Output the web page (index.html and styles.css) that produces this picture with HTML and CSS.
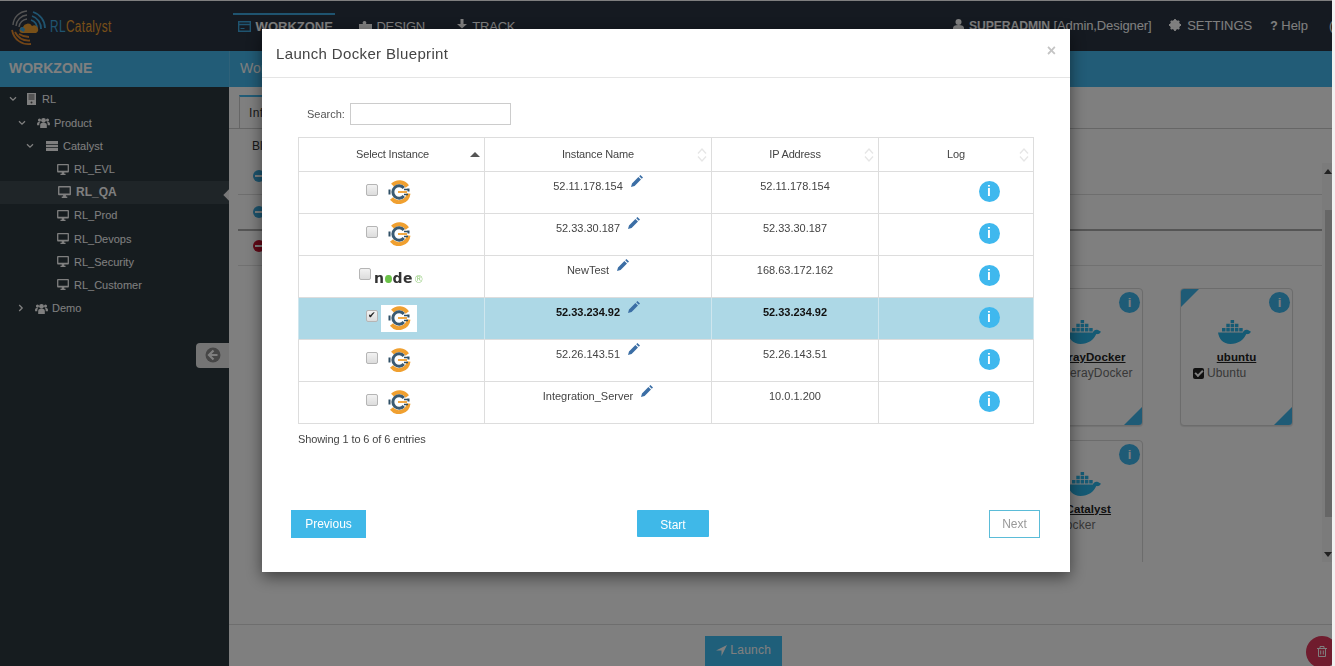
FILE: index.html

```html
<!DOCTYPE html>
<html lang="en">
<head>
  <meta charset="UTF-8">
  <meta name="viewport" content="width=device-width, initial-scale=1.0"/>
  <title>RLCatalyst - Launch Docker Blueprint</title>
  <link rel="stylesheet" href="styles.css">
</head>
<body>
  <svg class="defs" width="0" height="0">
    <symbol id="i-chef" viewBox="0 0 24 24">
      <path d="M5.500 5.200A9.600 9.600 0 0 1 20.300 6.500M21.500 13.500A9.600 9.600 0 0 1 4.500 18.500" fill="none" stroke="#f0a030" stroke-width="4"/>
      <path d="M2.500 9.500v5M21.500 8.500v3" stroke="#2f4f66" stroke-width="2"/>
      <path d="M16.800 8A6.200 6.200 0 1 0 16.800 16" fill="none" stroke="#3a5a72" stroke-width="3"/>
      <path d="M11 12H20" stroke="#f0a030" stroke-width="1.800"/>
      <path d="M17 9.500h4M17 14.500h4" stroke="#2f4f66" stroke-width="1.500"/>
    </symbol>
    <symbol id="i-pencil" viewBox="0 0 12 12">
      <path d="M0 12l1-3.600 6.400-6.400 2.600 2.600L3.600 11zM8.200 1.200L9.400 0 12 2.600l-1.200 1.200z" fill="#3b6ea5"/>
    </symbol>
    <symbol id="i-docker" viewBox="0 0 35 24">
      <path d="M1 12.500h25c.6-2.600 3-3.200 5-2.400l3 1.600c-1 2-3 2.600-4.800 2.400C27 20 21 24 13.500 24 6 24 2 19 1 12.500z" fill="#2ab4e8"/>
      <path d="M5 8h3.500v3.500H5zM9.300 8h3.500v3.500H9.300zM13.600 8h3.500v3.500h-3.500zM17.900 8h3.500v3.500h-3.500zM22.200 8h3.500v3.500h-3.500zM9.300 3.700h3.500v3.500H9.300zM13.600 3.700h3.500v3.500h-3.500zM17.900 3.700h3.500v3.500h-3.500zM13.600 0h3.500v3h-3.500z" fill="#2ab4e8"/>
    </symbol>
    <symbol id="i-desktop" viewBox="0 0 14 13">
      <path d="M1 0h12a1 1 0 0 1 1 1v8a1 1 0 0 1-1 1H8.500v1.500H10V13H4v-1.500h1.500V10H1a1 1 0 0 1-1-1V1a1 1 0 0 1 1-1zm.5 1.500v6.500h11V1.500z" fill="#fff"/>
    </symbol>
    <symbol id="i-users" viewBox="0 0 14 12">
      <circle cx="7" cy="3.600" r="2.600" fill="#fff"/>
      <circle cx="2.600" cy="3.400" r="1.700" fill="#fff"/>
      <circle cx="11.400" cy="3.400" r="1.700" fill="#fff"/>
      <path d="M3.400 12V8.600C3.400 7 5 6.400 7 6.400s3.600.6 3.600 2.200V12zM0 9V7c0-1 1-1.600 2.600-1.600l.6.2C2.600 6.400 2.400 7.400 2.400 9zM14 9V7c0-1-1-1.600-2.600-1.600l-.6.2c.6.8.8 1.800.8 3.400z" fill="#fff"/>
    </symbol>
    <symbol id="i-down" viewBox="0 0 8 6">
      <path d="M1 1.200l3 3 3-3" fill="none" stroke="#fff" stroke-width="1.300"/>
    </symbol>
    <symbol id="i-right" viewBox="0 0 6 8">
      <path d="M1.200 1l3 3-3 3" fill="none" stroke="#fff" stroke-width="1.300"/>
    </symbol>
    <symbol id="i-sort" viewBox="0 0 10 14">
      <path d="M1 5.500L5 1l4 4.500M1 8.500L5 13l4-4.500" fill="none" stroke="#e6e6e6" stroke-width="1.300"/>
    </symbol>
  </svg>

  <div class="app">
    <header class="topbar">
      <div class="brand">
        <svg class="brand-mark" width="38" height="38" viewBox="0 0 38 38" fill="none">
          <path d="M4 17A15 15 0 0 1 18 3M7 18A12 12 0 0 1 18 7M10 19A9 9 0 0 1 18 11" stroke="#a8a8a8" stroke-width="1.400"/>
          <path d="M24 4A17 17 0 0 1 36 20M23 8A13 13 0 0 1 32 21M22 12A9 9 0 0 1 28 21" stroke="#3fa9e0" stroke-width="1.800"/>
          <path d="M3 22C5 32 13 37 22 36M6 24C9 30 14 33 21 32.500M10 26C13 28 16 29 20 29" stroke="#e58a2e" stroke-width="1.800"/>
          <path d="M13 25a3 3 0 0 1 1-6 5 5 0 0 1 9-1 4 4 0 0 1 4 7z" fill="#f0a030"/>
          <path d="M11 22a2.500 2.500 0 0 1 3-3l2 2-1 3z" fill="#3fa9e0"/>
        </svg>
        <span class="brand-name"><span class="brand-rl">RL</span><span class="brand-cat">Catalyst</span></span>
      </div>

      <nav class="nav">
        <a class="nav-item active">
          <svg width="13" height="11" viewBox="0 0 13 11" fill="none"><path d="M.7.7h11.600v9.600H.7zM.7 3.500h11.600" stroke="#3fa9e0" stroke-width="1.400"/><path d="M2.500 7.500h4" stroke="#3fa9e0"/></svg>
          WORKZONE
        </a>
        <a class="nav-item">
          <svg width="13" height="12" viewBox="0 0 13 12" fill="#fff"><path d="M0 4h4C3 2.500 4 1 5.500 1S8 2.500 7 4h6v8H0z"/></svg>
          DESIGN
        </a>
        <a class="nav-item track">
          <svg width="12" height="13" viewBox="0 0 12 13" fill="#fff"><path d="M4.500 0h3v5H11L6 9.500 1 5h3.500zM0 10h12v3H0z"/></svg>
          TRACK
        </a>
      </nav>

      <div class="user-links">
        <span class="user-link who">
          <svg width="11" height="12" viewBox="0 0 11 12" fill="#fff"><circle cx="5.500" cy="3" r="3"/><path d="M0 12V9c0-2 2-3 5.500-3S11 7 11 9v3z"/></svg>
          <span><b>SUPERADMIN</b> [Admin,Designer]</span>
        </span>
        <span class="user-link settings">
          <svg width="12" height="12" viewBox="0 0 12 12"><circle cx="6" cy="6" r="3.800" fill="none" stroke="#fff" stroke-width="2.600"/><path d="M6 0v12M0 6h12M1.800 1.800l8.400 8.400M10.200 1.800l-8.400 8.400" stroke="#fff" stroke-width="1.800"/></svg>
          SETTINGS
        </span>
        <span class="user-link"><b>?</b> Help</span>
        <span class="user-link cut">(</span>
      </div>
    </header>

    <div class="content">
      <aside class="sidebar">
        <div class="side-title">WORKZONE</div>
        <ul class="tree">
          <li class="node lvl-0">
            <svg class="chev" width="8" height="6"><use href="#i-down"/></svg>
            <svg class="ico" width="9" height="12" viewBox="0 0 9 12"><path d="M0 0h9v12H0z" fill="#fff"/><path d="M1.500 2h6M1.500 4h6M1.500 6h6" stroke="#555"/><circle cx="4.500" cy="9.500" r="1" fill="#555"/></svg>
            RL
          </li>
          <li class="node lvl-1">
            <svg class="chev" width="8" height="6"><use href="#i-down"/></svg>
            <svg class="ico" width="13" height="11"><use href="#i-users"/></svg>
            Product
          </li>
          <li class="node lvl-2">
            <svg class="chev" width="8" height="6"><use href="#i-down"/></svg>
            <svg class="ico" width="12" height="10" viewBox="0 0 12 10" fill="#fff"><path d="M0 0h12v3H0zM0 3.800h12v2.400H0zM0 7h12v3H0z"/></svg>
            Catalyst
          </li>
          <li class="node leaf"><svg class="ico" width="12" height="11"><use href="#i-desktop"/></svg>RL_EVL</li>
          <li class="node leaf active"><svg class="ico" width="13" height="12"><use href="#i-desktop"/></svg>RL_QA</li>
          <li class="node leaf"><svg class="ico" width="12" height="11"><use href="#i-desktop"/></svg>RL_Prod</li>
          <li class="node leaf"><svg class="ico" width="12" height="11"><use href="#i-desktop"/></svg>RL_Devops</li>
          <li class="node leaf"><svg class="ico" width="12" height="11"><use href="#i-desktop"/></svg>RL_Security</li>
          <li class="node leaf"><svg class="ico" width="12" height="11"><use href="#i-desktop"/></svg>RL_Customer</li>
          <li class="node lvl-1">
            <svg class="chev" width="6" height="8"><use href="#i-right"/></svg>
            <svg class="ico" width="13" height="11"><use href="#i-users"/></svg>
            Demo
          </li>
        </ul>
        <button class="collapse-btn" type="button">
          <svg width="16" height="16" viewBox="0 0 16 16"><circle cx="8" cy="8" r="7.500" fill="#8c8c8c"/><path d="M8.500 3.500L4 8l4.500 4.500M4.500 8H12.500" fill="none" stroke="#fff" stroke-width="2.200"/></svg>
        </button>
      </aside>

      <main class="main">
        <div class="crumb">Workzone</div>
        <div class="tabs"><div class="tab">Info</div></div>
        <div class="tab-note">Blueprints</div>

        <div class="bp-scroll">
          <div class="bp-list">
            <div class="bp-row"><span class="dot blue"></span></div>
            <div class="bp-row thick"><span class="dot blue"></span></div>
            <div class="bp-row red-row"><span class="dot red"></span></div>

            <div class="cards">
              <div class="bp-card">
                <span class="card-info">i</span>
                <svg class="whale" width="35" height="24"><use href="#i-docker"/></svg>
                <div class="card-title">LiferayDocker</div>
                <div class="card-os"><span class="os-check"></span>LiferayDocker</div>
                <span class="corner-br"></span>
              </div>
              <div class="bp-card">
                <span class="corner-tl"></span>
                <span class="card-info">i</span>
                <svg class="whale" width="35" height="24"><use href="#i-docker"/></svg>
                <div class="card-title">ubuntu</div>
                <div class="card-os"><span class="os-check"></span>Ubuntu</div>
                <span class="corner-br"></span>
              </div>
              <div class="bp-card">
                <span class="card-info">i</span>
                <svg class="whale" width="35" height="24"><use href="#i-docker"/></svg>
                <div class="card-title long">RLCatalyst</div>
                <div class="card-os"><span class="os-check"></span>Docker</div>
              </div>
            </div>
          </div>
          <div class="scrollbar">
            <span class="arrow-up"></span>
            <span class="thumb"></span>
            <span class="arrow-down"></span>
          </div>
        </div>

        <div class="launch-bar">
          <button class="launch-btn" type="button">
            <svg width="11" height="11" viewBox="0 0 11 11" fill="#fff"><path d="M11 0L0 5.500h5.500V11z"/></svg>
            Launch
          </button>
        </div>
        <span class="trash">
          <svg width="10" height="11" viewBox="0 0 10 11" fill="none" stroke="#fff"><path d="M0 2.500h10M3 2.500V.5h4v2M1.500 2.500v8h7v-8M3.700 4.500v4M6.300 4.500v4"/></svg>
        </span>
      </main>
    </div>
  </div>

  <div class="backdrop"></div>

  <div class="modal">
    <div class="modal-head">
      <h4>Launch Docker Blueprint</h4>
      <span class="close">&times;</span>
    </div>

    <div class="modal-body">
      <label class="search">Search:<input type="text"></label>

      <table class="grid">
        <thead>
          <tr>
            <th class="c1">Select Instance<span class="sort-on"></span></th>
            <th class="c2">Instance Name<svg class="sort" width="10" height="14"><use href="#i-sort"/></svg></th>
            <th class="c3">IP Address<svg class="sort" width="10" height="14"><use href="#i-sort"/></svg></th>
            <th class="c4">Log<svg class="sort" width="10" height="14"><use href="#i-sort"/></svg></th>
          </tr>
        </thead>
        <tbody>
          <tr>
            <td><div class="pick"><input type="checkbox"><span class="os-logo"><svg width="24" height="24"><use href="#i-chef"/></svg></span></div></td>
            <td>52.11.178.154<svg class="pencil" width="12" height="12"><use href="#i-pencil"/></svg></td>
            <td>52.11.178.154</td>
            <td><span class="info">i</span></td>
          </tr>
          <tr>
            <td><div class="pick"><input type="checkbox"><span class="os-logo"><svg width="24" height="24"><use href="#i-chef"/></svg></span></div></td>
            <td>52.33.30.187<svg class="pencil" width="12" height="12"><use href="#i-pencil"/></svg></td>
            <td>52.33.30.187</td>
            <td><span class="info">i</span></td>
          </tr>
          <tr>
            <td><div class="pick node-pick"><input type="checkbox"><span class="node-logo">n<i></i>de<em>&reg;</em></span></div></td>
            <td>NewTest<svg class="pencil" width="12" height="12"><use href="#i-pencil"/></svg></td>
            <td>168.63.172.162</td>
            <td><span class="info">i</span></td>
          </tr>
          <tr class="selected">
            <td><div class="pick"><input type="checkbox" checked><span class="os-logo"><svg width="24" height="24"><use href="#i-chef"/></svg></span></div></td>
            <td>52.33.234.92<svg class="pencil" width="12" height="12"><use href="#i-pencil"/></svg></td>
            <td>52.33.234.92</td>
            <td><span class="info">i</span></td>
          </tr>
          <tr>
            <td><div class="pick"><input type="checkbox"><span class="os-logo"><svg width="24" height="24"><use href="#i-chef"/></svg></span></div></td>
            <td>52.26.143.51<svg class="pencil" width="12" height="12"><use href="#i-pencil"/></svg></td>
            <td>52.26.143.51</td>
            <td><span class="info">i</span></td>
          </tr>
          <tr>
            <td><div class="pick"><input type="checkbox"><span class="os-logo"><svg width="24" height="24"><use href="#i-chef"/></svg></span></div></td>
            <td>Integration_Server<svg class="pencil" width="12" height="12"><use href="#i-pencil"/></svg></td>
            <td>10.0.1.200</td>
            <td><span class="info">i</span></td>
          </tr>
        </tbody>
      </table>

      <div class="entries">Showing 1 to 6 of 6 entries</div>
    </div>

    <div class="modal-foot">
      <button class="btn" type="button">Previous</button>
      <button class="btn start" type="button">Start</button>
      <button class="btn ghost" type="button">Next</button>
    </div>
  </div>
</body>
</html>
```

FILE: styles.css

```css
* { box-sizing: border-box; }
html, body { height: 100%; }
body { margin: 0; background: #f1f1f1; font-family: "Liberation Sans", Arial, sans-serif; overflow: hidden; }
.defs { position: absolute; }
button { font-family: inherit; }

.app { width: calc(100% - 3px); height: 100vh; display: flex; flex-direction: column; }

/* top bar */
.topbar { height: 51px; flex: none; display: flex; background: #2a3442; border-top: 1px solid #fff; color: #fff; overflow: hidden; }
.brand { width: 233px; flex: none; display: flex; align-items: center; padding: 2px 0 0 9px; }
.brand-mark { flex: none; }
.brand-name { font-size: 16px; margin-left: 3px; display: inline-block; transform: scaleX(.74); transform-origin: left center; letter-spacing: .5px; white-space: nowrap; }
.brand-rl { color: #3fa9e0; }
.brand-cat { color: #f0a030; }

.nav { display: flex; gap: 19px; padding-top: 12px; font-size: 13px; }
.nav-item { height: 22px; padding: 4px 5px 0; border-top: 2px solid transparent; white-space: nowrap; line-height: 16px; letter-spacing: -.2px; }
.nav-item svg { margin-right: 1px; vertical-align: -1px; }
.nav-item.active { border-top-color: #3fa9e0; font-weight: bold; width: 102px; letter-spacing: 0; }
.nav-item.track { margin-left: 2px; }

.user-links { margin-left: auto; display: flex; gap: 20px; padding-top: 17px; font-size: 13px; line-height: 16px; white-space: nowrap; }
.user-link b { font-size: 12.2px; }
.user-link svg { vertical-align: -1px; margin-right: 1px; }
.user-link.who { margin-right: -3px; letter-spacing: -.1px; }
.user-link.settings { margin-right: -2px; }
.user-link.settings svg { margin-right: 3px; }
.user-link.cut { width: 3px; margin-left: 1px; overflow: hidden; }

.content { flex: 1; display: flex; min-height: 0; }

/* left tree */
.sidebar { width: 229px; flex: none; background: #2c383e; position: relative; color: #fff; }
.side-title { height: 36px; background: #44b8ee; padding-left: 9px; font-size: 14px; font-weight: bold; line-height: 34px; color: #fff; }
.tree { list-style: none; margin: 0; padding: .9px 0 0; font-size: 11px; }
.node { height: 23.2px; display: flex; align-items: center; position: relative; }
.chev { flex: none; }
.ico { flex: none; }
.lvl-0 { padding-left: 9px; }
.lvl-0 .ico { margin: 0 6px 0 10px; }
.lvl-1 { padding-left: 18px; }
.lvl-1 .ico { margin: 0 4px 0 11px; }
.lvl-2 { padding-left: 26px; }
.lvl-2 .ico { margin: 0 5px 0 12px; }
.leaf { padding-left: 57px; }
.leaf .ico { margin-right: 5px; }
.node.active { background: #3e4a50; font-size: 12px; font-weight: bold; padding-left: 58px; }
.node.active::after { content: ""; position: absolute; right: -4px; top: 10px; width: 8px; height: 8px; background: #f0f0f0; transform: rotate(45deg); }
.collapse-btn { position: absolute; right: 0; top: 292px; width: 33px; height: 25px; border: 0; padding: 0 0 2px; background: #e9e9e9; border-radius: 4px 0 0 4px; display: flex; align-items: center; justify-content: center; }

/* main area */
.main { flex: 1; min-width: 0; background: #fff; display: flex; flex-direction: column; position: relative; overflow: hidden; font-size: 12px; color: #333; }
.crumb { height: 36px; flex: none; background: #44b8ee; border-left: 1px solid #5cc3f2; padding-left: 10px; font-size: 14px; line-height: 34px; color: #fff; }
.tabs { margin-top: 8px; padding-left: 10px; height: 34px; flex: none; border-bottom: 1px solid #ccc; }
.tab { width: 120px; height: 33px; border-top: 2px solid #44b8ee; border-left: 1px solid #ccc; padding: 9px 0 0 9px; letter-spacing: .4px; }
.tab-note { height: 34px; flex: none; padding: 10px 0 0 23px; }

.bp-scroll { height: 399px; flex: none; display: flex; padding-left: 9px; }
.bp-list { flex: 1; min-width: 0; overflow: hidden; }
.bp-row { height: 32px; padding: 7px 0 0 15px; border-bottom: 1px solid #ddd; }
.bp-row.thick { height: 36px; padding-top: 11px; border-bottom: 2px solid #aaa; }
.bp-row.red-row { height: 35px; padding-top: 9px; border-bottom-color: #e3e3e3; }
.dot { display: block; width: 12px; height: 12px; border-radius: 50%; position: relative; }
.dot::after { content: ""; position: absolute; left: 2px; right: 2px; top: 5px; height: 2px; background: #fff; }
.dot.blue { background: #3aa8dc; }
.dot.red { background: #c4122e; }
.cards { display: grid; grid-template-columns: 113px 113px; gap: 14px 37px; justify-content: end; padding: 22px 29px 0 0; }
.bp-card { height: 138px; position: relative; border: 1px solid #d8d8d8; border-radius: 4px; text-align: center; padding-top: 31px; overflow: hidden; background: #fff; box-shadow: 0 1px 1px rgba(0,0,0,.1); }
.whale { display: block; margin: 0 auto 0; position: relative; left: -2px; }
.card-title { margin-top: 6px; font-size: 11.5px; font-weight: bold; text-decoration: underline; color: #222; letter-spacing: .1px; line-height: 14px; }
.card-title.long { padding-right: 12px; }
.card-os { margin-top: 1px; padding-left: 12px; text-align: left; font-size: 12px; line-height: 16px; color: #707070; white-space: nowrap; letter-spacing: .12px; }
.os-check { display: inline-block; width: 11px; height: 11px; margin-right: 3px; border-radius: 2px; background: #222; vertical-align: -2px; position: relative; }
.os-check::after { content: ""; position: absolute; left: 2px; top: 2px; width: 6px; height: 3px; border-left: 2px solid #fff; border-bottom: 2px solid #fff; transform: rotate(-45deg); }
.card-info { position: absolute; right: 2px; top: 3px; width: 21px; height: 21px; border-radius: 50%; background: #3fb6ec; color: #fff; font-size: 13px; font-weight: bold; text-align: center; line-height: 21px; }
.corner-tl { position: absolute; left: 0; top: 0; border-top: 18px solid #3fb6ec; border-right: 18px solid transparent; }
.corner-br { position: absolute; right: 0; bottom: 0; border-bottom: 18px solid #3fb6ec; border-left: 18px solid transparent; }

.scrollbar { width: 10px; flex: none; position: relative; background: #f6f6f6; }
.thumb { position: absolute; right: 0; top: 47px; bottom: 45px; width: 7px; background: #ccc; }
.arrow-up { position: absolute; right: 0; top: 6px; border: 4px solid transparent; border-top: 0; border-bottom: 5px solid #444; }
.arrow-down { position: absolute; right: 0; bottom: 5px; border: 4px solid transparent; border-bottom: 0; border-top: 5px solid #444; }

.launch-bar { margin-top: auto; height: 42px; flex: none; border-top: 1px solid #ddd; display: flex; justify-content: center; padding: 11px 74px 0 0; }
.launch-btn { width: 77px; height: 32px; border: 0; background: #3fbef4; color: #fff; font-size: 12px; letter-spacing: .25px; padding: 0 0 4px; }
.launch-btn svg { vertical-align: -2px; }
.trash { position: absolute; right: -6px; bottom: -2px; width: 32px; height: 32px; border-radius: 50%; background: #e0385c; padding: 10px 0 0 11px; }

/* modal */
.backdrop { position: fixed; left: 0; top: 0; right: 3px; bottom: 0; background: rgba(0,0,0,.5); }
.modal { position: fixed; left: 262px; top: 29px; width: 808px; height: 543px; background: #fff; box-shadow: 0 5px 15px rgba(0,0,0,.5); display: flex; flex-direction: column; color: #444; }
.modal-head { height: 49px; flex: none; border-bottom: 1px solid #e5e5e5; padding: 0 14px; display: flex; align-items: center; justify-content: space-between; }
.modal-head h4 { margin: 0; font-size: 15px; font-weight: normal; letter-spacing: .35px; color: #444; }
.close { font-size: 16px; font-weight: bold; color: #c4c4c4; margin: -4px 0 0; }

.modal-body { flex: 1; padding: 25px 36px 0; font-size: 11px; }
.search { display: flex; align-items: center; gap: 5px; padding-left: 9px; height: 22px; color: #555; }
.search input { width: 161px; height: 22px; border: 1px solid #ccc; padding: 0 4px; margin: 0; }

.grid { width: 736px; margin-top: 12px; border-collapse: collapse; table-layout: fixed; font-size: 11px; }
.grid th, .grid td { border: 1px solid #ddd; text-align: center; }
.grid th { height: 34px; font-weight: normal; position: relative; padding: 0 0 2px; letter-spacing: -.15px; }
.grid th.c1 { padding-left: 2px; }
.grid td { height: 42px; padding: 6px 0 0; vertical-align: top; line-height: 16px; }
.grid .c1 { width: 186px; }
.grid .c2 { width: 227px; }
.grid .c3 { width: 167px; }
.sort { position: absolute; right: 4px; top: 10px; }
.sort-on { position: absolute; right: 4px; top: 14px; border: 5px solid transparent; border-top: 0; border-bottom: 5px solid #555; }
.pencil { margin: -6px 0 0 8px; vertical-align: 3px; }
.selected td { background: #add8e6; border-left-color: #cfe6ee; border-right-color: #cfe6ee; font-weight: bold; color: #111; }
.info { display: inline-block; width: 21px; height: 21px; margin: 3px 0 0 66px; border-radius: 50%; background: #3fb8ee; color: #fff; font-size: 14px; font-weight: bold; line-height: 21px; }

.pick { display: flex; justify-content: center; align-items: flex-start; padding-top: 1px; }
.pick input { appearance: none; width: 12px; height: 12px; margin: 5px 3px 0 0; border: 1px solid #b5b5b5; border-radius: 2px; background: linear-gradient(#f2f2f2, #dcdcdc); position: relative; }
.pick input:checked::after { content: "\2714"; position: absolute; left: 1px; top: -2px; font-size: 9px; line-height: 13px; color: #222; }
.os-logo { width: 36px; height: 27px; padding-bottom: 2px; background: #fff; display: flex; align-items: center; justify-content: center; }

.node-pick { padding-top: 0; }
.node-pick input { margin: 6px 3px 0 0; }
.node-logo { display: flex; align-items: baseline; height: 20px; margin-top: 6px; width: 50px; font-family: "DejaVu Sans", sans-serif; font-size: 14px; font-weight: bold; color: #333; letter-spacing: .3px; line-height: 20px; }
.node-logo i { width: 8px; height: 8px; border-radius: 50%; background: #6cc24a; margin: 0 1px; }
.node-logo em { font-size: 10px; font-style: normal; font-weight: normal; color: #9ccf86; margin-left: 1px; }

.entries { margin-top: 9px; line-height: 13px; color: #444; letter-spacing: -.1px; }

.modal-foot { height: 62px; flex: none; display: flex; justify-content: space-between; align-items: flex-start; padding: 0 30px 0 29px; }
.btn { width: 75px; height: 28px; border: 0; background: #3fb8e8; color: #fff; font-size: 12px; padding: 0; }
.btn.start { width: 72px; height: 27px; padding-top: 3px; margin-right: 9px; border-radius: 1px; }
.btn.ghost { width: 51px; background: #fff; border: 1px solid #5bbcd8; color: #999; }
```
